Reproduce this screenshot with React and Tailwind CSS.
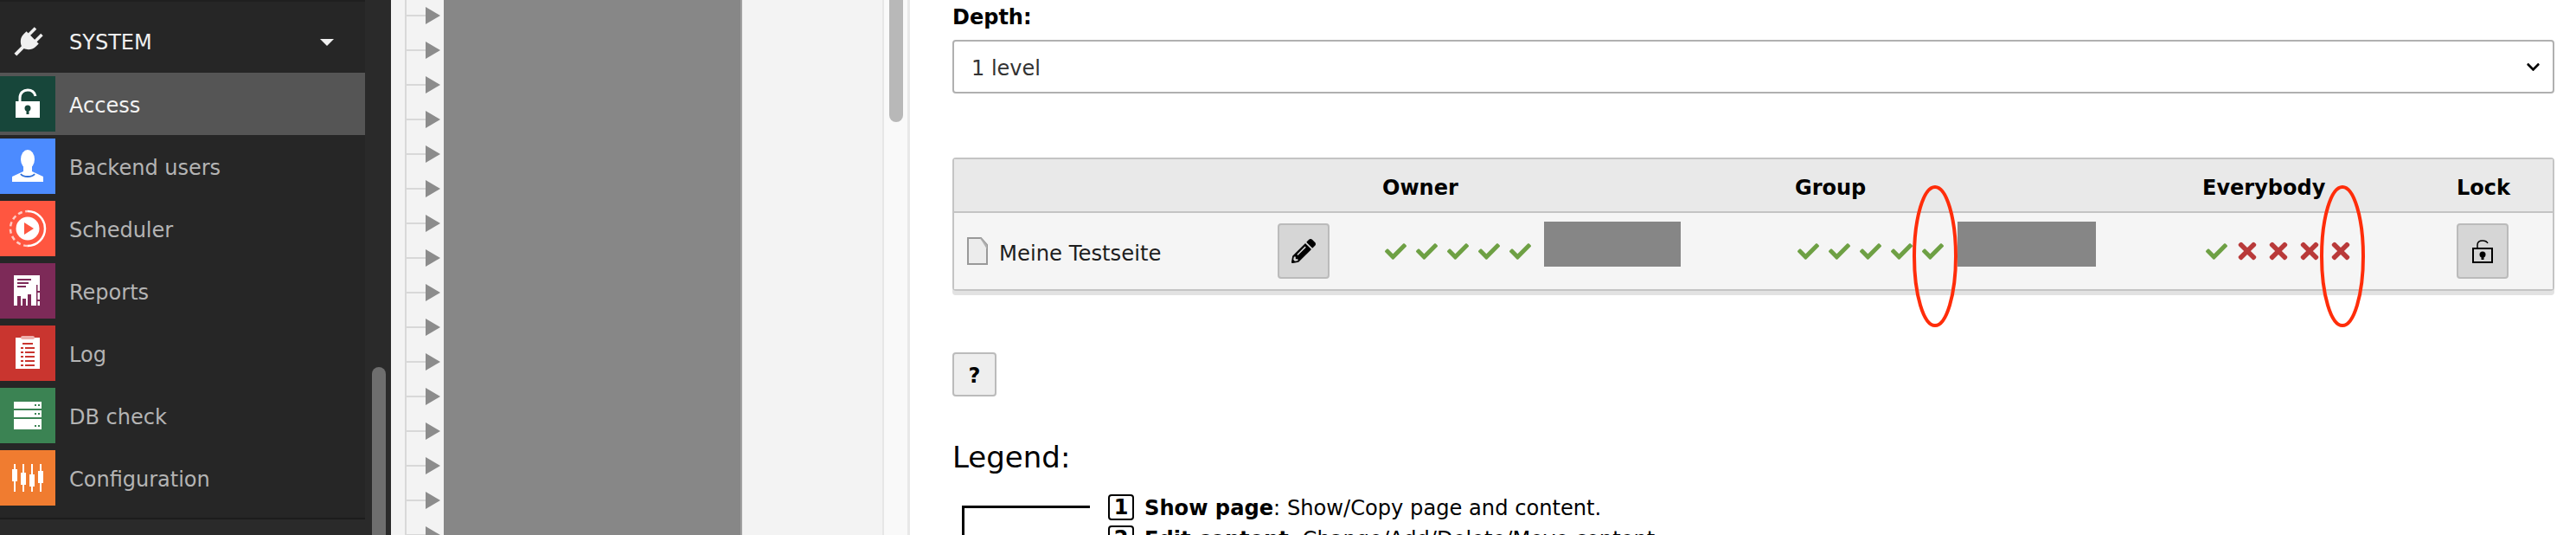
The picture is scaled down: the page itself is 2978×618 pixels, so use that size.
import { FaCheck, FaChevronDown, FaPencilAlt, FaTimes } from "react-icons/fa";

function PlugIcon() {
  return (
    <svg width="40" height="40" viewBox="0 0 40 40" fill="#f0f0f0">
      <g transform="rotate(45 20 20)">
        <rect x="13" y="2" width="3.500" height="11" />
        <rect x="23.500" y="2" width="3.500" height="11" />
        <path d="M10 12h20v5c0 6-5 10-8 11v12h-4V28c-3-1-8-5-8-11z" />
      </g>
    </svg>
  );
}

function AccessIcon() {
  return (
    <svg width="64" height="64" viewBox="0 0 64 64">
      <path d="M23 29v-4c0-5.500 4-9 9-9s8 3 9 7" fill="none" stroke="#fff" strokeWidth="3" />
      <rect x="18" y="29" width="28" height="19" fill="#fff" />
      <circle cx="32" cy="37" r="3.500" fill="#17463a" />
      <rect x="30.500" y="38" width="3" height="6" fill="#17463a" />
    </svg>
  );
}

function UsersIcon() {
  return (
    <svg width="64" height="64" viewBox="0 0 64 64">
      <ellipse cx="32" cy="24" rx="8" ry="11" fill="#fff" />
      <path d="M27 32h10v6l13 6v6H14v-6l13-6z" fill="#fff" />
      <path d="M24 41c3 4 13 4 16 0" fill="none" stroke="#2f6fd8" strokeWidth="2" />
    </svg>
  );
}

function SchedulerIcon() {
  return (
    <svg width="64" height="64" viewBox="0 0 64 64">
      <circle cx="32" cy="32" r="13.500" fill="#fff" />
      <path d="M28 25l11 7-11 7z" fill="#ff5640" />
      <path d="M32 12a20 20 0 0 1 0 40" fill="none" stroke="#fff" strokeWidth="2.500" />
      <path d="M32 52a20 20 0 0 1 0-40" fill="none" stroke="#fff" strokeOpacity="0.7" strokeWidth="2.500" strokeDasharray="5 3.500" />
    </svg>
  );
}

function ReportsIcon() {
  return (
    <svg width="64" height="64" viewBox="0 0 64 64">
      <path d="M16 14h30v35H16z" fill="#fff" />
      <g fill="#7d2a58">
        <rect x="20" y="18" width="16" height="2" />
        <rect x="20" y="22" width="13" height="2" />
        <rect x="20" y="26" width="10" height="2" />
        <rect x="20" y="38" width="4" height="11" />
        <rect x="26" y="41" width="4" height="8" />
        <rect x="32" y="36" width="4" height="13" />
        <rect x="42" y="25" width="1.500" height="24" />
        <rect x="43" y="32" width="3" height="2" />
        <rect x="43" y="42" width="3" height="2" />
      </g>
    </svg>
  );
}

function LogIcon() {
  return (
    <svg width="64" height="64" viewBox="0 0 64 64">
      <rect x="18" y="14" width="28" height="36" fill="#fff" />
      <rect x="24" y="12" width="16" height="4" rx="2" fill="#eeb0ac" />
      <g fill="#c9352f">
        <rect x="26" y="20" width="12" height="2" />
        <rect x="24" y="25" width="3" height="2" />
        <rect x="29" y="25" width="11" height="2" />
        <rect x="24" y="30" width="3" height="2" />
        <rect x="29" y="30" width="11" height="2" />
        <rect x="24" y="35" width="3" height="2" />
        <rect x="29" y="35" width="11" height="2" />
        <rect x="24" y="40" width="3" height="2" />
        <rect x="29" y="40" width="11" height="2" />
        <rect x="24" y="45" width="3" height="2" />
        <rect x="29" y="45" width="11" height="2" />
      </g>
    </svg>
  );
}

function DbIcon() {
  return (
    <svg width="64" height="64" viewBox="0 0 64 64">
      <rect x="16" y="16" width="32" height="8" fill="#fff" />
      <rect x="16" y="26" width="32" height="8" fill="#fff" />
      <rect x="16" y="36" width="32" height="12" fill="#fff" />
      <g fill="#3b8353">
        <rect x="40" y="19" width="2" height="2" />
        <rect x="44" y="19" width="2" height="2" />
        <rect x="40" y="29" width="2" height="2" />
        <rect x="44" y="29" width="2" height="2" />
        <rect x="40" y="43" width="2" height="2" />
        <rect x="44" y="43" width="2" height="2" />
      </g>
    </svg>
  );
}

function ConfigIcon() {
  return (
    <svg width="64" height="64" viewBox="0 0 64 64" fill="#fff">
      <rect x="16" y="16" width="2" height="32" />
      <rect x="26" y="16" width="2" height="32" />
      <rect x="36" y="16" width="2" height="32" />
      <rect x="46" y="16" width="2" height="32" />
      <rect x="14" y="22" width="6" height="14" />
      <rect x="24" y="26" width="6" height="14" />
      <rect x="34" y="28" width="6" height="14" />
      <rect x="44" y="24" width="6" height="14" />
    </svg>
  );
}

const MODULES = [
  { label: "Access", bg: "bg-[#17463a]", Icon: AccessIcon, active: true },
  { label: "Backend users", bg: "bg-[#4c8bff]", Icon: UsersIcon },
  { label: "Scheduler", bg: "bg-[#ff5640]", Icon: SchedulerIcon },
  { label: "Reports", bg: "bg-[#7d2a58]", Icon: ReportsIcon },
  { label: "Log", bg: "bg-[#c9352f]", Icon: LogIcon },
  { label: "DB check", bg: "bg-[#3b8353]", Icon: DbIcon },
  { label: "Configuration", bg: "bg-[#f07c30]", Icon: ConfigIcon },
];

const TREE_ROWS = Array.from({ length: 16 }, (_, i) => i);
const TABLE_COLS = "grid grid-cols-[495px_477px_473px_294px_1fr]";

function Sidebar() {
  return (
    <aside className="flex w-[452px] shrink-0 bg-[#2a2a2a]">
      <div className="w-[422px] h-[600px] flex flex-col bg-[#262626] border-t-2 border-b-2 border-t-[#1f1f1f] border-b-[#1c1c1c]">
        <div className="h-[82px] shrink-0 pt-[12px] flex items-center text-[#f0f0f0]">
          <div className="w-[64px] flex justify-center">
            <PlugIcon />
          </div>
          <span className="ml-4 flex-1">SYSTEM</span>
          <div className="mr-[36px] w-0 h-0 border-x-8 border-x-transparent border-t-8 border-t-[#f0f0f0]" />
        </div>
        {MODULES.map(({ label, bg, Icon, active }) => (
          <div key={label} className={`h-[72px] shrink-0 flex items-center ${active ? "bg-[#555555] text-[#f2f2f2]" : "text-[#b4b4b4]"}`}>
            <div className={`w-[64px] h-[64px] ${bg}`}>
              <Icon />
            </div>
            <span className="ml-4 pt-[4px]">{label}</span>
          </div>
        ))}
      </div>
      <div className="flex-1 pt-[424px] pl-2">
        <div className="w-4 h-[300px] rounded-t-lg bg-[#6e6e6e]" />
      </div>
    </aside>
  );
}

function Tree() {
  return (
    <section className="flex w-[600px] shrink-0 bg-[#f3f3f3]">
      <div className="w-[61px] shrink-0 pl-4">
        <div className="border-l-2 border-[#d8d8d8] -mt-[2px]">
          {TREE_ROWS.map((row) => (
            <div key={row} className="h-10 flex items-center">
              <div className="w-[22px] h-[2px] bg-[#d8d8d8]" />
              <svg width="17" height="20" viewBox="0 0 17 20">
                <path d="M0 0l17 10L0 20z" fill="#8c8c8c" />
              </svg>
            </div>
          ))}
        </div>
      </div>
      <div className="w-[345px] shrink-0 bg-[#878787] border-r-2 border-[#a2a2a2]" />
      <div className="w-[164px] shrink-0 border-r-2 border-[#e6e6e6]" />
      <div className="flex-1 pl-[6px] bg-[#f9f9f9] border-r-[3px] border-[#e8e8e8]">
        <div className="w-4 h-[141px] rounded-b-lg bg-[#b8b8b8]" />
      </div>
    </section>
  );
}

function Check() {
  return (
    <div className="w-9 flex justify-center text-[#6ea044]">
      <FaCheck size={25} />
    </div>
  );
}

function Cross() {
  return (
    <div className="w-9 flex justify-center text-[#b93a3a]">
      <FaTimes size={30} />
    </div>
  );
}

function Ring({ className }) {
  return (
    <svg className={`absolute top-[32px] ${className}`} width="52" height="164" viewBox="0 0 52 164">
      <ellipse cx="26" cy="82" rx="24" ry="80" fill="none" stroke="#ff2d0a" strokeWidth="4" />
    </svg>
  );
}

function Permissions() {
  return (
    <div className="relative mt-[74px]">
      <div className="border-2 border-[#c4c4c4] rounded shadow-[0_5px_0_#e2e2e2]">
        <div className={`${TABLE_COLS} h-[62px] pt-[6px] items-center bg-[#e9e9e9] border-b-2 border-[#c4c4c4] font-bold text-black`}>
          <div />
          <div>Owner</div>
          <div>Group</div>
          <div className="-ml-[2px]">Everybody</div>
          <div className="-ml-[2px]">Lock</div>
        </div>
        <div className={`${TABLE_COLS} h-[88px] items-center bg-[#f5f5f5]`}>
          <div className="flex items-center pl-[15px] pr-[61px]">
            <svg width="24" height="32" viewBox="0 0 24 32">
              <path d="M1 1h15l7 8v22H1z" fill="#ececec" stroke="#999" strokeWidth="2" />
              <path d="M15 1h1l7 8v5z" fill="#b0b0b0" />
            </svg>
            <span className="ml-[13px] pt-[6px] flex-1 text-[24.3px] text-[#1e1e1e]">Meine Testseite</span>
            <button className="w-[60px] h-[64px] flex items-center justify-center bg-[#d6d6d6] border-2 border-[#bbbbbb] rounded text-black">
              <FaPencilAlt size={28} />
            </button>
          </div>
          <div className="h-full flex items-center -ml-[3px]">
            <Check /><Check /><Check /><Check /><Check />
            <div className="ml-[10px] mb-[16px] w-[158px] h-[52px] bg-[#868686]" />
          </div>
          <div className="h-full flex items-center -ml-[3px]">
            <Check /><Check /><Check /><Check /><Check />
            <div className="ml-[11px] mb-[16px] w-[160px] h-[52px] bg-[#868686]" />
          </div>
          <div className="h-full flex items-center -ml-[4px]">
            <Check /><Cross /><Cross /><Cross /><Cross />
          </div>
          <div className="-ml-[2px]">
            <button className="w-[60px] h-[64px] flex items-center justify-center bg-[#d6d6d6] border-2 border-[#bbbbbb] rounded">
              <svg width="24" height="27" viewBox="0 0 24 27">
                <path d="M6 10V6c0-3 2-5 6-5 3 0 5 1 6 3" fill="none" stroke="#000" strokeWidth="1.500" />
                <rect x="1" y="10" width="22" height="16" fill="none" stroke="#000" strokeWidth="2" />
                <circle cx="12" cy="17" r="3.500" />
                <rect x="10.500" y="18" width="3" height="5" />
              </svg>
            </button>
          </div>
        </div>
      </div>
      <Ring className="left-[1110px]" />
      <Ring className="left-[1581px]" />
    </div>
  );
}

function Legend() {
  return (
    <div className="mt-[19px] flex">
      <div className="ml-[11px] mt-[13px] w-[148px] h-[60px] border-t-[3px] border-l-[3px] border-black" />
      <div className="ml-[21px] flex flex-col gap-[6px]">
        <div className="h-[30px] flex items-center text-black">
          <span className="w-[30px] h-[30px] flex items-center justify-center border-2 border-black rounded font-bold">1</span>
          <span className="ml-3 pt-[2px] text-[24.15px]"><b>Show page</b>: Show/Copy page and content.</span>
        </div>
        <div className="h-[30px] flex items-center text-black">
          <span className="w-[30px] h-[30px] flex items-center justify-center border-2 border-black rounded font-bold">2</span>
          <span className="ml-3 pt-[2px] text-[24.15px]"><b>Edit content</b>: Change/Add/Delete/Move content.</span>
        </div>
      </div>
    </div>
  );
}

export default function App() {
  return (
    <div className="flex h-[618px] overflow-hidden bg-white text-[24px] leading-[36px] font-['DejaVu_Sans',sans-serif]">
      <Sidebar />
      <Tree />
      <main className="flex-1 pl-[49px] pr-[25px]">
        <label className="block h-[36px] leading-[40px] font-bold text-black">Depth:</label>
        <div className="relative mt-[10px]">
          <select className="block w-full h-[62px] pl-[20px] pt-[3px] appearance-none bg-white border-2 border-[#b0b0b0] rounded text-[#333333]">
            <option>1 level</option>
          </select>
          <FaChevronDown size={17} className="absolute right-[16px] top-[23px] text-black" />
        </div>
        <Permissions />
        <button className="block mt-[71px] w-[51px] h-[51px] pt-[2px] bg-[#eeeeee] border-2 border-[#bbbbbb] rounded font-bold text-black">?</button>
        <h2 className="mt-[46px] text-[34px] leading-[48px] text-black">Legend:</h2>
        <Legend />
      </main>
    </div>
  );
}
